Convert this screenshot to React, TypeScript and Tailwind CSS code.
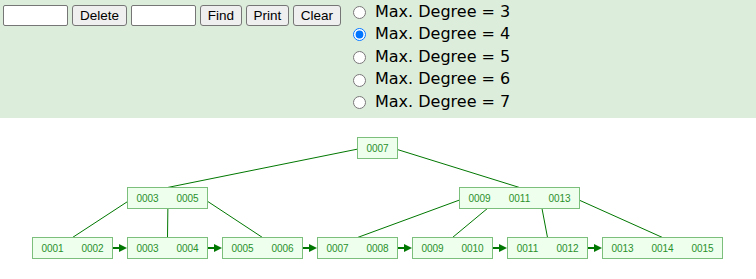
import { useState } from 'react'

type TreeNode = { x: number; y: number; keys: string[] }

const KEY_W = 40
const NODE_H = 21

const root: TreeNode = { x: 357, y: 137, keys: ['0007'] }
const mids: TreeNode[] = [
  { x: 127, y: 187, keys: ['0003', '0005'] },
  { x: 459, y: 187, keys: ['0009', '0011', '0013'] },
]
const leaves: TreeNode[] = [
  { x: 32, y: 237, keys: ['0001', '0002'] },
  { x: 127, y: 237, keys: ['0003', '0004'] },
  { x: 222, y: 237, keys: ['0005', '0006'] },
  { x: 317, y: 237, keys: ['0007', '0008'] },
  { x: 412, y: 237, keys: ['0009', '0010'] },
  { x: 507, y: 237, keys: ['0011', '0012'] },
  { x: 602, y: 237, keys: ['0013', '0014', '0015'] },
]

// which children hang off each inner node
const links: [TreeNode, TreeNode[]][] = [
  [root, mids],
  [mids[0], leaves.slice(0, 3)],
  [mids[1], leaves.slice(3, 7)],
]

const width = (n: TreeNode) => n.keys.length * KEY_W + 1

// where the edge to child i leaves the parent
function tailX(n: TreeNode, i: number) {
  if (i === 0) return n.x + 6
  if (i === n.keys.length) return n.x + n.keys.length * KEY_W - 4.5
  return n.x + KEY_W * i + 1
}

function Node({ node }: { node: TreeNode }) {
  return (
    <g>
      <rect
        x={node.x + 0.5}
        y={node.y + 0.5}
        width={width(node) - 1}
        height={NODE_H}
        fill="#eeffee"
        stroke="#7cbf7c"
        strokeWidth={1}
      />
      {node.keys.map((k, i) => (
        <text
          key={k}
          x={node.x + 20.5 + KEY_W * i}
          y={node.y + 11.5}
          textAnchor="middle"
          dominantBaseline="central"
          fontSize={10}
          fontFamily='"Liberation Sans", Arial, sans-serif'
          fill="#2a902a"
        >
          {k}
        </text>
      ))}
    </g>
  )
}

function TreeCanvas() {
  return (
    <svg width={756} height={161} viewBox="0 118 756 161" className="block">
      {links.map(([parent, kids]) =>
        kids.map((c, i) => (
          <line
            key={parent.keys[0] + c.keys[0]}
            x1={tailX(parent, i)}
            y1={parent.y + 11}
            x2={c.x + width(c) / 2}
            y2={c.y + 0.5}
            stroke="#007700"
            strokeWidth={1}
          />
        ))
      )}
      {leaves.slice(0, -1).map((l, i) => {
        const next = leaves[i + 1]
        const y = l.y + 11
        return (
          <g key={'arrow' + i}>
            <line x1={l.x + width(l) - 5} y1={y} x2={next.x - 7} y2={y} stroke="#007700" strokeWidth={2} />
            <polygon points={`${next.x - 8},${y - 4} ${next.x},${y} ${next.x - 8},${y + 4}`} fill="#007700" />
          </g>
        )
      })}
      <Node node={root} />
      {mids.map(n => <Node key={n.keys[0]} node={n} />)}
      {leaves.map(n => <Node key={n.keys[0]} node={n} />)}
    </svg>
  )
}

const btn =
  'h-[21px] rounded-[3px] border border-[#767676] bg-[#efefef] text-[13.5px] text-black leading-none'

export default function App() {
  const [degree, setDegree] = useState(4)

  return (
    <div className="w-[756px] h-[279px] overflow-hidden bg-white font-['Liberation_Sans',Arial,sans-serif]">
      {/* controls */}
      <div className="flex h-[118px] bg-[#ddeddb]">
        <div className="flex items-start gap-1 pl-[3px] pt-[5px]">
          <input type="text" className="h-[21px] w-[65px] rounded-[2px] border border-[#767676] bg-white" />
          <button className={`${btn} w-[55px]`}>Delete</button>
          <input type="text" className="h-[21px] w-[65px] rounded-[2px] border border-[#767676] bg-white" />
          <button className={`${btn} w-[42px]`}>Find</button>
          <button className={`${btn} w-[43px]`}>Print</button>
          <button className={`${btn} w-[48px]`}>Clear</button>
        </div>
        <div className="flex flex-col pl-[12px] pt-[0.5px] font-['DejaVu_Sans',Verdana,sans-serif] text-[16px] text-black">
          {[3, 4, 5, 6, 7].map(d => (
            <label key={d} className="flex h-[22.6px] items-center leading-[22.6px]">
              <input
                type="radio"
                name="degree"
                checked={degree === d}
                onChange={() => setDegree(d)}
                className="m-0 mt-[1px] h-[13px] w-[13px]"
              />
              <span className="ml-[9px]">Max. Degree = {d}</span>
            </label>
          ))}
        </div>
      </div>

      {/* tree */}
      <TreeCanvas />
    </div>
  )
}
